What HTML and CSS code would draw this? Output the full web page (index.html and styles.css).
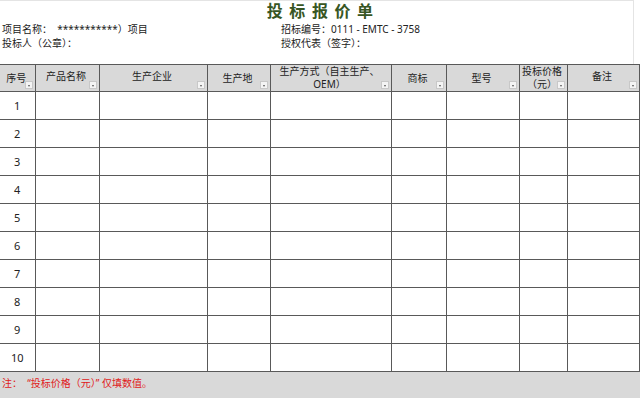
FILE: index.html
```html
<!DOCTYPE html>
<html lang="zh">
<head>
<meta charset="utf-8">
<link rel="stylesheet" href="styles.css">
</head>
<body>
<div class="sheet">
  <div class="top">
    <h1 class="title">投 标 报 价 单</h1>
    <div class="info">
      <div class="info-row"><span class="info-left">项目名称：&nbsp;&nbsp;***********）项目</span><span class="info-right">招标编号：0111 - EMTC - 3758</span></div>
      <div class="info-row"><span class="info-left">投标人（公章）：</span><span class="info-right">授权代表（签字）：</span></div>
    </div>
  </div>
  <table class="grid">
    <colgroup>
      <col style="width:35px"><col style="width:64px"><col style="width:108px"><col style="width:63px"><col style="width:121px"><col style="width:55px"><col style="width:73px"><col style="width:48px"><col style="width:72px">
    </colgroup>
    <thead>
      <tr>
        <th class="hd"><span class="hd-text">序号</span><span class="dd"></span></th>
        <th class="hd"><span class="hd-text up">产品名称</span><span class="dd"></span></th>
        <th class="hd"><span class="hd-text up">生产企业</span><span class="dd"></span></th>
        <th class="hd"><span class="hd-text">生产地</span><span class="dd"></span></th>
        <th class="hd"><span class="hd-text two">生产方式（自主生产、<br>OEM）</span><span class="dd"></span></th>
        <th class="hd"><span class="hd-text">商标</span><span class="dd"></span></th>
        <th class="hd"><span class="hd-text">型号</span><span class="dd"></span></th>
        <th class="hd"><span class="hd-text two">投标价格<br>（元）</span><span class="dd"></span></th>
        <th class="hd"><span class="hd-text up">备注</span><span class="dd"></span></th>
      </tr>
    </thead>
    <tbody>
      <tr><td class="num">1</td><td></td><td></td><td></td><td></td><td></td><td></td><td></td><td></td></tr>
      <tr><td class="num">2</td><td></td><td></td><td></td><td></td><td></td><td></td><td></td><td></td></tr>
      <tr><td class="num">3</td><td></td><td></td><td></td><td></td><td></td><td></td><td></td><td></td></tr>
      <tr><td class="num">4</td><td></td><td></td><td></td><td></td><td></td><td></td><td></td><td></td></tr>
      <tr><td class="num">5</td><td></td><td></td><td></td><td></td><td></td><td></td><td></td><td></td></tr>
      <tr><td class="num">6</td><td></td><td></td><td></td><td></td><td></td><td></td><td></td><td></td></tr>
      <tr><td class="num">7</td><td></td><td></td><td></td><td></td><td></td><td></td><td></td><td></td></tr>
      <tr><td class="num">8</td><td></td><td></td><td></td><td></td><td></td><td></td><td></td><td></td></tr>
      <tr><td class="num">9</td><td></td><td></td><td></td><td></td><td></td><td></td><td></td><td></td></tr>
      <tr><td class="num">10</td><td></td><td></td><td></td><td></td><td></td><td></td><td></td><td></td></tr>
    </tbody>
  </table>
  <div class="note">注：&nbsp;&nbsp;“投标价格（元）” 仅填数值。</div>
</div>
</body>
</html>
```

FILE: styles.css
```css
html, body {
  margin: 0;
  padding: 0;
  background: #ffffff;
}
body {
  font-family: "Noto Sans", "Noto Sans CJK SC", sans-serif;
  color: #222222;
  font-size: 10px;
}
.sheet {
  width: 640px;
  height: 398px;
  overflow: hidden;
  display: flex;
  flex-direction: column;
}
.top {
  height: 64px;
  box-sizing: border-box;
  border-top: 1px solid #e4e4e4;
  border-right: 1px solid #e4e4e4;
  margin-right: 6px;
}
.title {
  margin: 0;
  height: 21px;
  line-height: 21px;
  text-align: center;
  font-size: 16px;
  font-weight: bold;
  color: #375623;
  letter-spacing: 1.2px;
  padding-left: 8px;
}
.info {
  display: flex;
  flex-direction: column;
  padding-left: 2px;
}
.info-row {
  display: flex;
  height: 14px;
  line-height: 14px;
  font-size: 10px;
  color: #222;
}
.info-left {
  width: 279px;
}
.info-right {
  flex: 1;
}
.grid {
  border-collapse: collapse;
  table-layout: fixed;
  width: 639px;
}
.grid th, .grid td {
  border: 1px solid #595959;
  padding: 0;
}
.grid th:first-child, .grid td:first-child {
  border-left: none;
}
.hd {
  height: 26px;
  background: #d9d9d9;
  position: relative;
  font-weight: normal;
  font-size: 10px;
  line-height: 13px;
  color: #222;
  text-align: center;
  vertical-align: middle;
}
.hd-text {
  display: block;
  padding-right: 2px;
}
.hd-text.up {
  margin-top: -4px;
}
.dd {
  position: absolute;
  right: 2px;
  bottom: 2px;
  width: 8px;
  height: 8px;
  background: #f4f4f4;
  border: 1px solid #c8c8c8;
  box-sizing: border-box;
}
.dd::after {
  content: "";
  position: absolute;
  left: 2px;
  top: 3px;
  width: 0;
  height: 0;
  border-left: 1.5px solid transparent;
  border-right: 1.5px solid transparent;
  border-top: 2px solid #555;
}
.grid td {
  height: 27px;
  background: #ffffff;
}
.num {
  text-align: center;
  font-size: 11px;
  color: #222;
}
.note {
  flex: 1;
  background: #d9d9d9;
  color: #e02020;
  font-size: 10px;
  padding-left: 2px;
  padding-top: 4px;
  line-height: 14px;
}
```
